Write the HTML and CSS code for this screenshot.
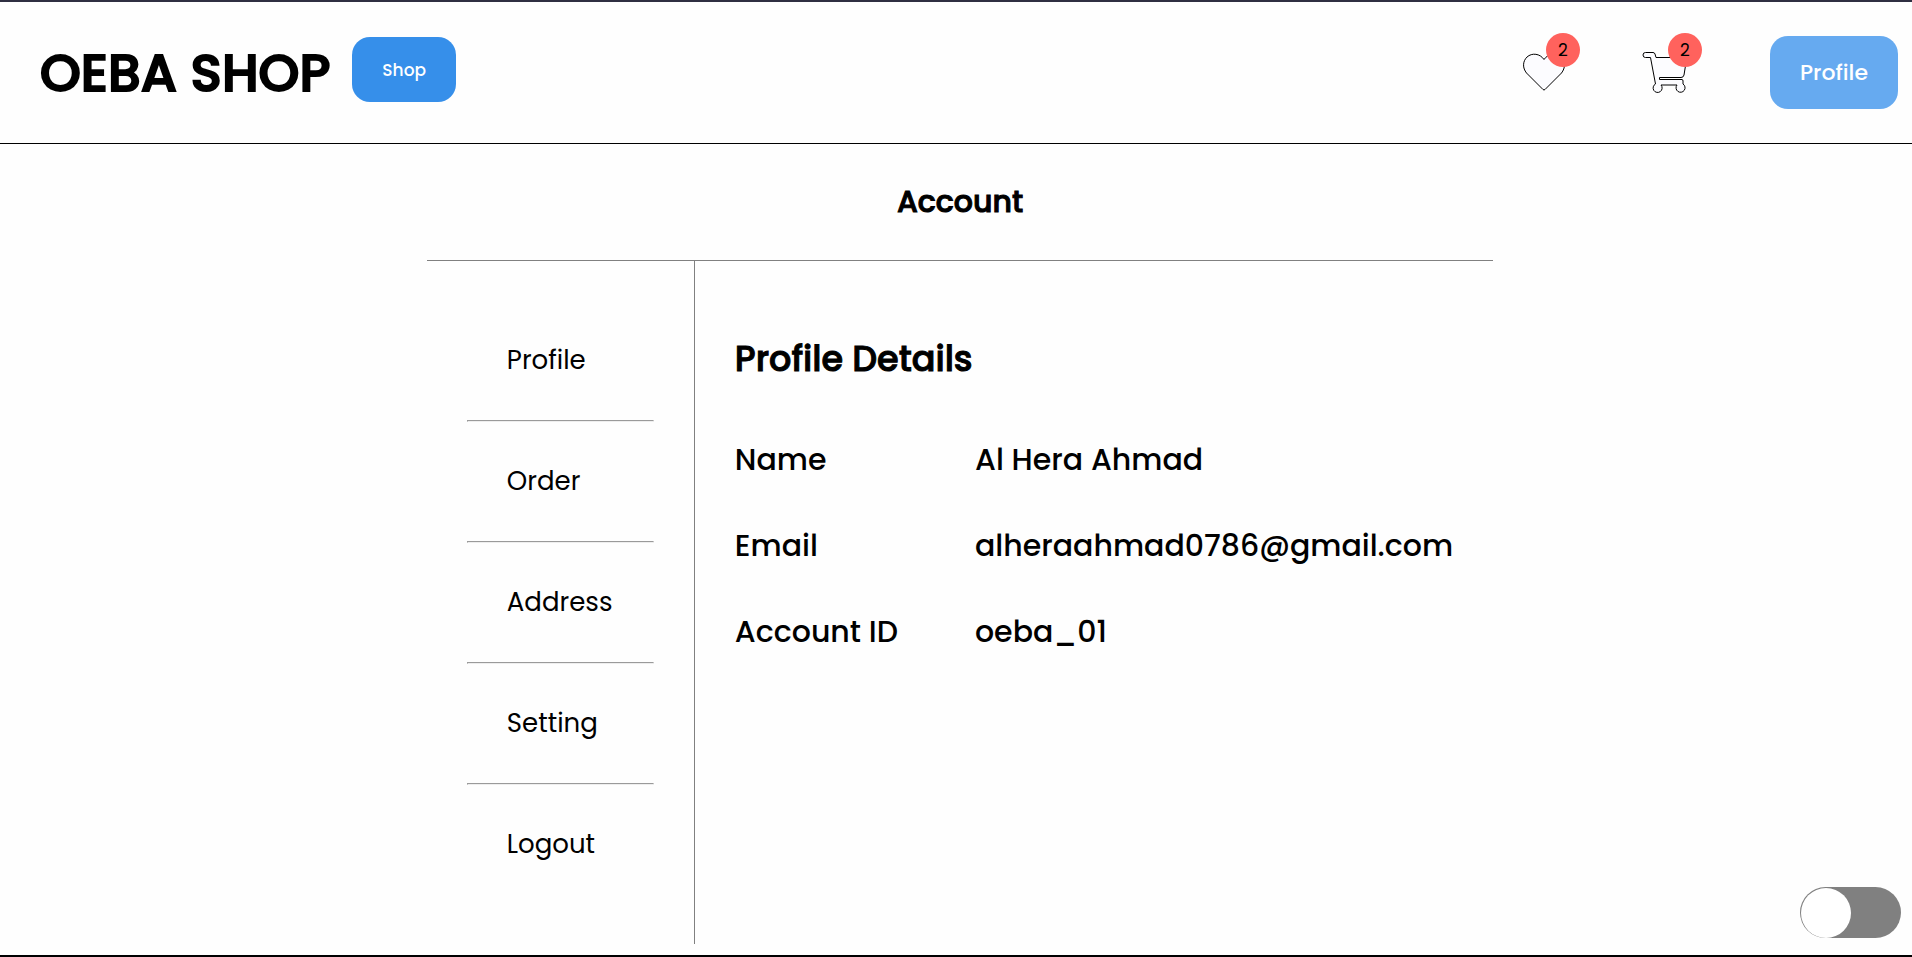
FILE: index.html
```html
<!DOCTYPE html>
<html lang="en">
<head>
<meta charset="utf-8">
<meta name="viewport" content="width=device-width, initial-scale=1">
<title>OEBA SHOP</title>
<link rel="stylesheet" href="styles.css">
</head>
<body class="page">
<header class="header">
  <h1 class="logo">OEBA SHOP</h1>
  <button class="button button-shop" type="button">Shop</button>
  <nav class="actions">
    <a class="icon-link" href="#wishlist" aria-label="Wishlist">
      <svg class="icon" viewBox="0 0 44 44" width="44" height="44" fill="#fcfcff" stroke="#000" stroke-width="1" stroke-linejoin="round">
        <path d="M22 8.500C18 2.500 10 1.500 5 6C0.500 10.500 0.500 17 4.500 22L21 38.500Q22 39.500 23 38.500L39.500 22C43.500 17 43.500 10.500 39 6C34 1.500 26 2.500 22 8.500Z"/>
      </svg>
      <span class="badge">2</span>
    </a>
    <a class="icon-link" href="#cart" aria-label="Cart">
      <svg class="icon" viewBox="0 0 46 44" width="46" height="44" fill="#fcfcff" stroke="#000" stroke-width="1" stroke-linejoin="round">
        <path d="M3.500 1.500H11Q12.500 1.500 13 3L14 6.500H43Q45 6.500 44.500 8.500L42 24Q41.500 26.500 39 26.500H17.500V28.500H40Q41 28.500 41 30V33A4.500 4.500 0 1 1 35 34H19A4.500 4.500 0 1 1 13.500 33L8.500 6.500H3.500Q1 6.500 1 4Q1 1.500 3.500 1.500Z"/>
      </svg>
      <span class="badge">2</span>
    </a>
    <button class="button button-profile" type="button">Profile</button>
  </nav>
</header>
<main class="main">
  <section class="account">
    <h2 class="account-title">Account</h2>
    <div class="account-body">
      <nav class="menu">
        <a class="menu-link" href="#profile">Profile</a>
        <hr class="menu-line">
        <a class="menu-link" href="#order">Order</a>
        <hr class="menu-line">
        <a class="menu-link" href="#address">Address</a>
        <hr class="menu-line">
        <a class="menu-link" href="#setting">Setting</a>
        <hr class="menu-line">
        <a class="menu-link" href="#logout">Logout</a>
      </nav>
      <div class="details">
        <h3 class="details-title">Profile Details</h3>
        <table class="details-table">
          <tr><th scope="row">Name</th><td>Al Hera Ahmad</td></tr>
          <tr><th scope="row">Email</th><td>alheraahmad0786@gmail.com</td></tr>
          <tr><th scope="row">Account ID</th><td>oeba_01</td></tr>
        </table>
      </div>
    </div>
  </section>
</main>
<input class="switch" type="checkbox" role="switch" aria-label="Dark mode">
</body>
</html>
```
FILE: styles.css
```css
* { box-sizing: border-box; }

.page {
  margin: 0;
  min-height: 100vh;
  border-top: 2px solid #2f2f41;
  border-bottom: 2px solid #000;
  background: #fefefe;
  color: #000;
  font-family: Poppins, Inter, sans-serif;
}

.header {
  display: flex;
  align-items: center;
  height: 142px;
  padding: 0 14px 0 40px;
  border-bottom: 1px solid #000;
}

.logo {
  margin: 0 22px 0 0;
  font-size: 52px;
  font-weight: 500;
  line-height: 76px;
  -webkit-text-stroke: 2px #000;
}

.button {
  border: 0;
  border-radius: 18px;
  color: #fff;
  font-family: inherit;
  font-weight: 500;
}

.button-shop {
  height: 65px;
  padding: 0 30px;
  margin-bottom: 6px;
  background: #368fea;
  font-size: 17px;
}

.button-profile {
  height: 73px;
  padding: 0 30px;
  background: #66aaf0;
  font-size: 22px;
}

.actions {
  display: flex;
  align-items: center;
  gap: 76px;
  margin-left: auto;
}

.icon-link {
  position: relative;
  display: block;
  color: #000;
  text-decoration: none;
}

.icon-link + .button-profile { margin-left: 6px; }

.icon { display: block; }

.badge {
  position: absolute;
  top: -18px;
  right: -14px;
  width: 34px;
  border-radius: 50%;
  background: #ff625d;
  font-size: 17px;
  line-height: 34px;
  text-align: center;
}

.main {
  display: flex;
  justify-content: center;
  padding-left: 8px;
}

.account-title {
  margin: 0;
  padding: 35px 0;
  border-bottom: 1px solid #808080;
  font-size: 30px;
  font-weight: 500;
  line-height: 46px;
  text-align: center;
  -webkit-text-stroke: 1px #000;
}

.account-body { display: flex; }

.menu {
  min-width: 268px;
  padding: 40px;
  border-right: 1px solid #808080;
}

.menu-link {
  display: block;
  padding: 40px;
  color: #000;
  font-size: 26px;
  line-height: 39px;
  text-decoration: none;
}

.menu-line { margin: 0; }

.details { padding: 72px 40px 40px; }

.details-title {
  margin: 0 0 32px;
  font-size: 35px;
  font-weight: 500;
  line-height: 52px;
  -webkit-text-stroke: 1px #000;
}

.details-table {
  border-collapse: collapse;
  font-size: 30px;
  line-height: 46px;
}

.details-table th,
.details-table td {
  padding: 20px 0;
  font-weight: 500;
  text-align: left;
}

.details-table th { padding-right: 77px; }

.switch {
  position: fixed;
  right: 11px;
  bottom: 19px;
  display: flex;
  width: 101px;
  height: 51px;
  margin: 0;
  padding: 1px 0 0 1px;
  border-radius: 26px;
  background: #808080;
  appearance: none;
}

.switch::before {
  width: 50px;
  height: 50px;
  border-radius: 50%;
  background: #fff;
  content: "";
}

.switch:checked { justify-content: flex-end; }
```
